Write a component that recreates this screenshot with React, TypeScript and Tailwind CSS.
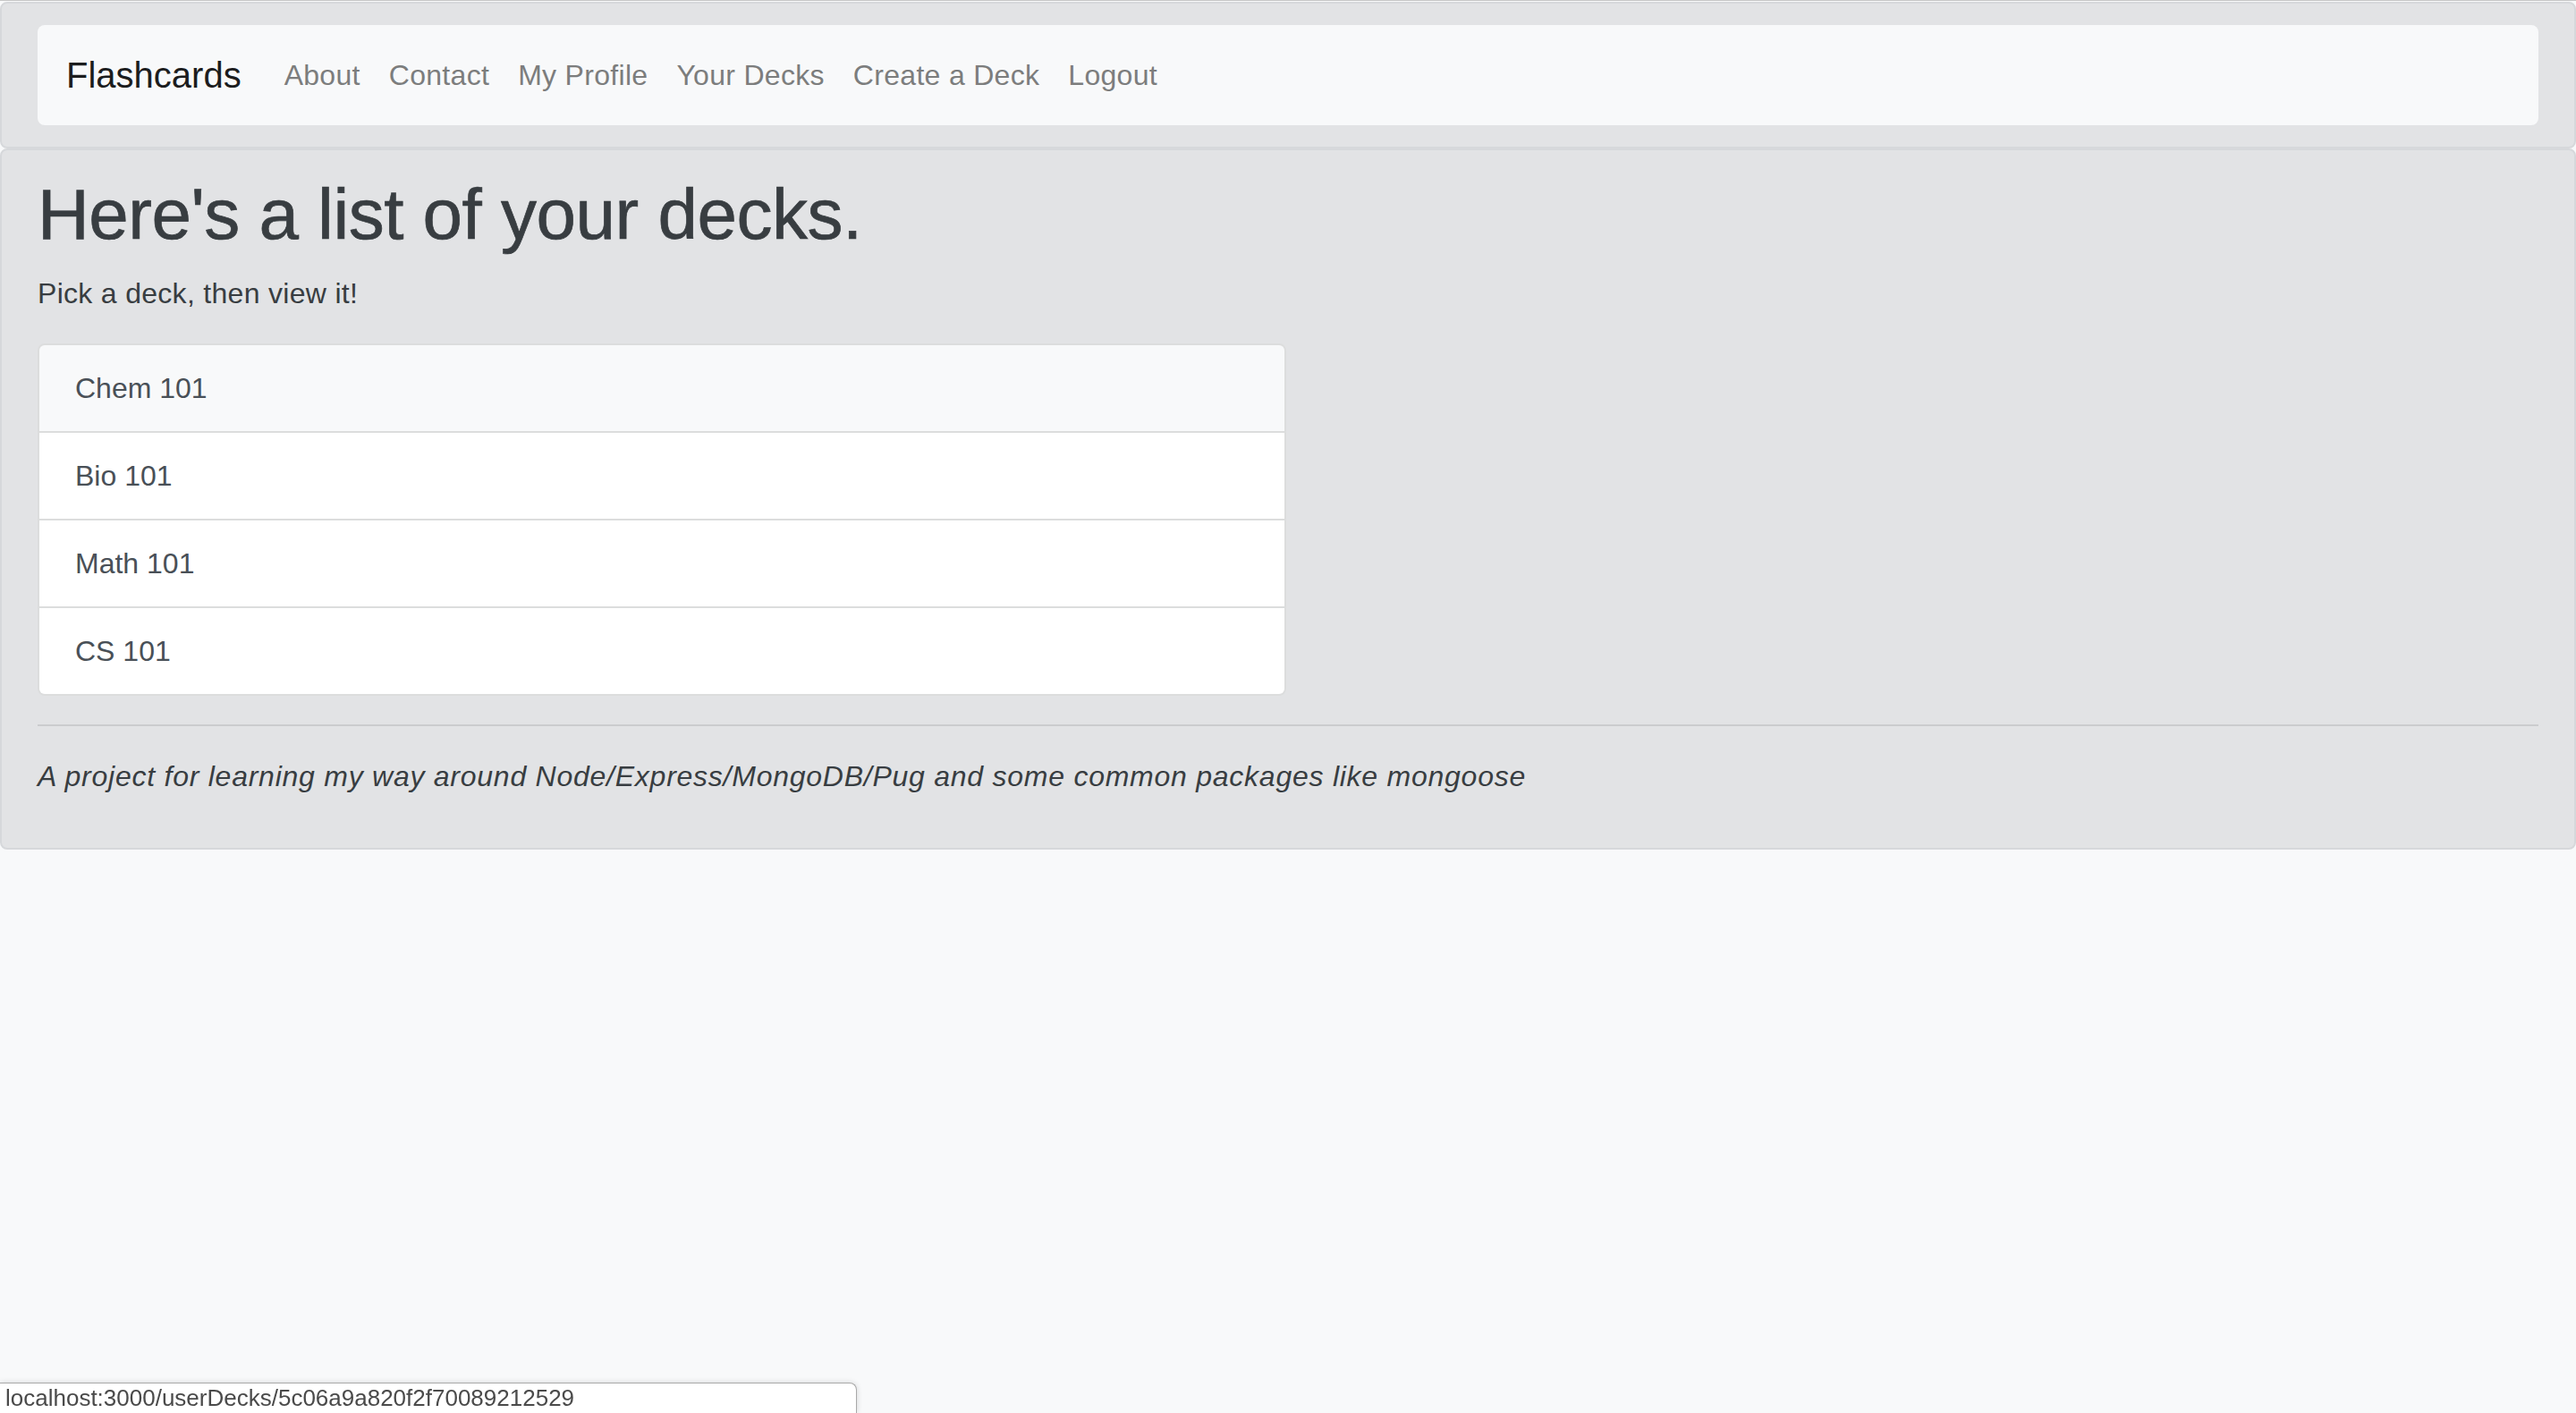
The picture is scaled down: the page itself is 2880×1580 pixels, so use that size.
import React from "react";

const links = ["About", "Contact", "My Profile", "Your Decks", "Create a Deck", "Logout"];
const decks = ["Chem 101", "Bio 101", "Math 101", "CS 101"];

export default function App() {
  return (
    <div className="min-h-screen bg-[#f8f9fa] font-['Liberation_Sans','Helvetica',sans-serif] border-t border-[#c6c6c6] pt-px">
      <div className="border-2 border-[#d6d8db] rounded-[8px] bg-[#e2e3e5] px-[40px] py-[24px]">
        <nav className="flex items-center px-8 py-4 rounded-[8px] bg-[#f8f9fa]">
          <span className="text-[40px] leading-[60px] py-[10px] mr-8 text-[#1c1d1e]">Flashcards</span>
          {links.map((l) => (
            <span key={l} className="text-[32px] leading-[48px] px-4 py-4 tracking-[0.3px] text-[#7c7d7d]">
              {l}
            </span>
          ))}
        </nav>
      </div>
      <div className="border-2 border-[#d6d8db] rounded-[8px] bg-[#e2e3e5] px-[40px] py-[24px] text-[#383d41]">
        <h1 className="text-[80px] leading-[96px] font-medium mb-4 tracking-[-0.5px] [-webkit-text-stroke:0.7px_#383d41]">
          Here's a list of your decks.
        </h1>
        <p className="text-[32px] leading-[48px] mb-8 tracking-[0.3px]">Pick a deck, then view it!</p>
        <div className="w-[1396px] border-2 border-[#dcdddd] rounded-[8px] overflow-hidden divide-y-2 divide-[#dcdddd]">
          {decks.map((d, i) => (
            <div
              key={d}
              className={
                i === 0
                  ? "bg-[#f8f9fa] px-[40px] py-[24px] text-[32px] leading-[48px] text-[#495057]"
                  : "bg-white px-[40px] py-[24px] text-[32px] leading-[48px] text-[#495057]"
              }
            >
              {d}
            </div>
          ))}
        </div>
        <hr className="mt-8 mb-8 border-0 border-t-2 border-[#cbccce]" />
        <p className="italic text-[32px] leading-[48px] mb-8 tracking-[0.75px]">
          A project for learning my way around Node/Express/MongoDB/Pug and some common packages like mongoose
        </p>
      </div>
      <div className="fixed bottom-0 left-0 w-[958px] h-[34px] bg-white border border-b-0 border-l-0 border-[#a9a9a9] rounded-tr-[8px] shadow-[0_0_6px_rgba(0,0,0,0.15)] px-[6px] text-[26px] leading-[32px] text-[#4a4a4a]">
        localhost:3000/userDecks/5c06a9a820f2f70089212529
      </div>
    </div>
  );
}
